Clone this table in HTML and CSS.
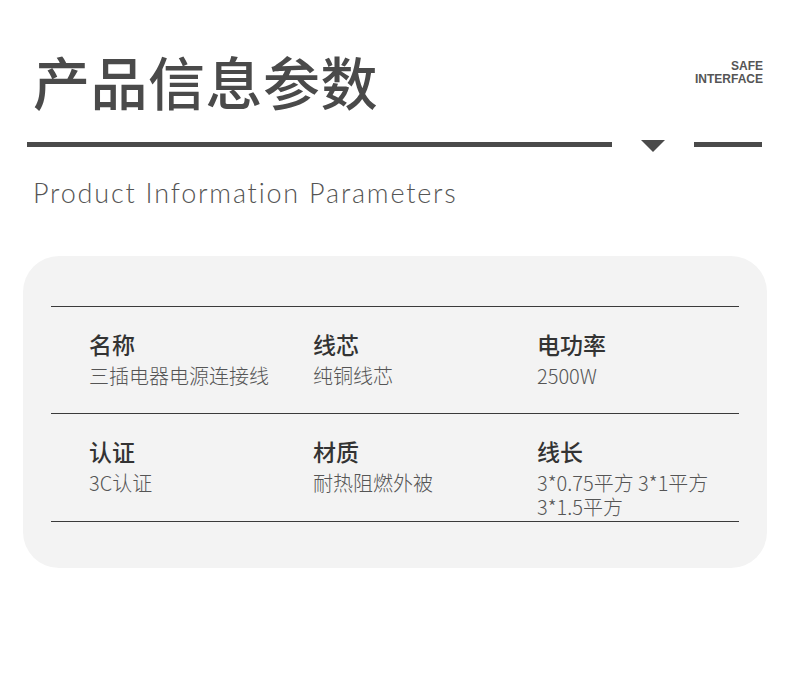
FILE: index.html
```html
<!DOCTYPE html>
<html lang="zh-CN">
<head>
    <meta charset="UTF-8">
    <meta name="viewport" content="width=device-width, initial-scale=1.0">
    <title>产品信息参数</title>
    <link rel="stylesheet" href="styles.css">
</head>
<body>
    <div class="page">
        <div class="header">
            <h1 class="title">产品信息参数</h1>
            <div class="tag">SAFE<br>INTERFACE</div>
        </div>

        <div class="divider">
            <div class="bar bar-long"></div>
            <div class="arrow"></div>
            <div class="bar bar-short"></div>
        </div>

        <p class="subtitle">Product Information Parameters</p>

        <div class="spec-card">
            <div class="spec-row">
                <div class="spec">
                    <div class="spec-label">名称</div>
                    <div class="spec-value">三插电器电源连接线</div>
                </div>
                <div class="spec">
                    <div class="spec-label">线芯</div>
                    <div class="spec-value">纯铜线芯</div>
                </div>
                <div class="spec">
                    <div class="spec-label">电功率</div>
                    <div class="spec-value">2500W</div>
                </div>
            </div>
            <div class="spec-row">
                <div class="spec">
                    <div class="spec-label">认证</div>
                    <div class="spec-value">3C认证</div>
                </div>
                <div class="spec">
                    <div class="spec-label">材质</div>
                    <div class="spec-value">耐热阻燃外被</div>
                </div>
                <div class="spec">
                    <div class="spec-label">线长</div>
                    <div class="spec-value">3*0.75平方 3*1平方</div>
                    <div class="spec-value spec-value-more">3*1.5平方</div>
                </div>
            </div>
        </div>
    </div>
</body>
</html>
```

FILE: styles.css
```css
body {
    margin: 0;
    padding: 0;
    background-color: #fff;
    color: #333;
    font-family: "Noto Sans CJK SC", "Noto Sans", sans-serif;
}
.page {
    width: 790px;
    height: 690px;
    overflow: hidden;
}
.header {
    display: flex;
    justify-content: space-between;
    align-items: flex-start;
    padding: 0 27px 0 33px;
    height: 140px;
}
.title {
    margin: 50px 0 0;
    font-size: 57px;
    line-height: 61px;
    font-weight: 500;
    color: #4a4a4a;
    letter-spacing: 0.5px;
}
.tag {
    margin-top: 60px;
    font-family: "Liberation Sans", Arial, sans-serif;
    font-size: 12px;
    line-height: 13px;
    font-weight: bold;
    color: #555;
    text-align: right;
}
.divider {
    display: flex;
    align-items: flex-start;
    gap: 29px;
    padding: 0 28px 0 27px;
    height: 12px;
}
.bar {
    height: 5px;
    margin-top: 2px;
    background-color: #4a4a4a;
}
.bar-long {
    flex: 1;
}
.bar-short {
    width: 68px;
}
.arrow {
    width: 0;
    height: 0;
    border-left: 12px solid transparent;
    border-right: 12px solid transparent;
    border-top: 12px solid #4a4a4a;
}
.subtitle {
    margin: 24px 0 0 33px;
    font-family: Lato, sans-serif;
    font-weight: 300;
    font-size: 27px;
    line-height: 34px;
    letter-spacing: 1.8px;
    color: #555;
}
.spec-card {
    margin: 46px 23px 0;
    height: 312px;
    box-sizing: border-box;
    padding: 50px 28px 0;
    background-color: #f3f3f3;
    border-radius: 36px;
}
.spec-row {
    display: grid;
    grid-template-columns: 224px 224px 1fr;
    padding: 0 0 0 38px;
    height: 107px;
    box-sizing: border-box;
    border-top: 1px solid #3a3a3a;
}
.spec-row:last-child {
    height: 109px;
    border-bottom: 1px solid #3a3a3a;
}
.spec {
    padding-top: 19px;
}
.spec-label {
    font-size: 23px;
    line-height: 36px;
    font-weight: 500;
    color: #333;
}
.spec-value {
    margin-top: 3px;
    font-size: 20px;
    line-height: 22px;
    font-weight: 300;
    color: #555;
}
.spec-value-more {
    margin-top: 2px;
}
```
